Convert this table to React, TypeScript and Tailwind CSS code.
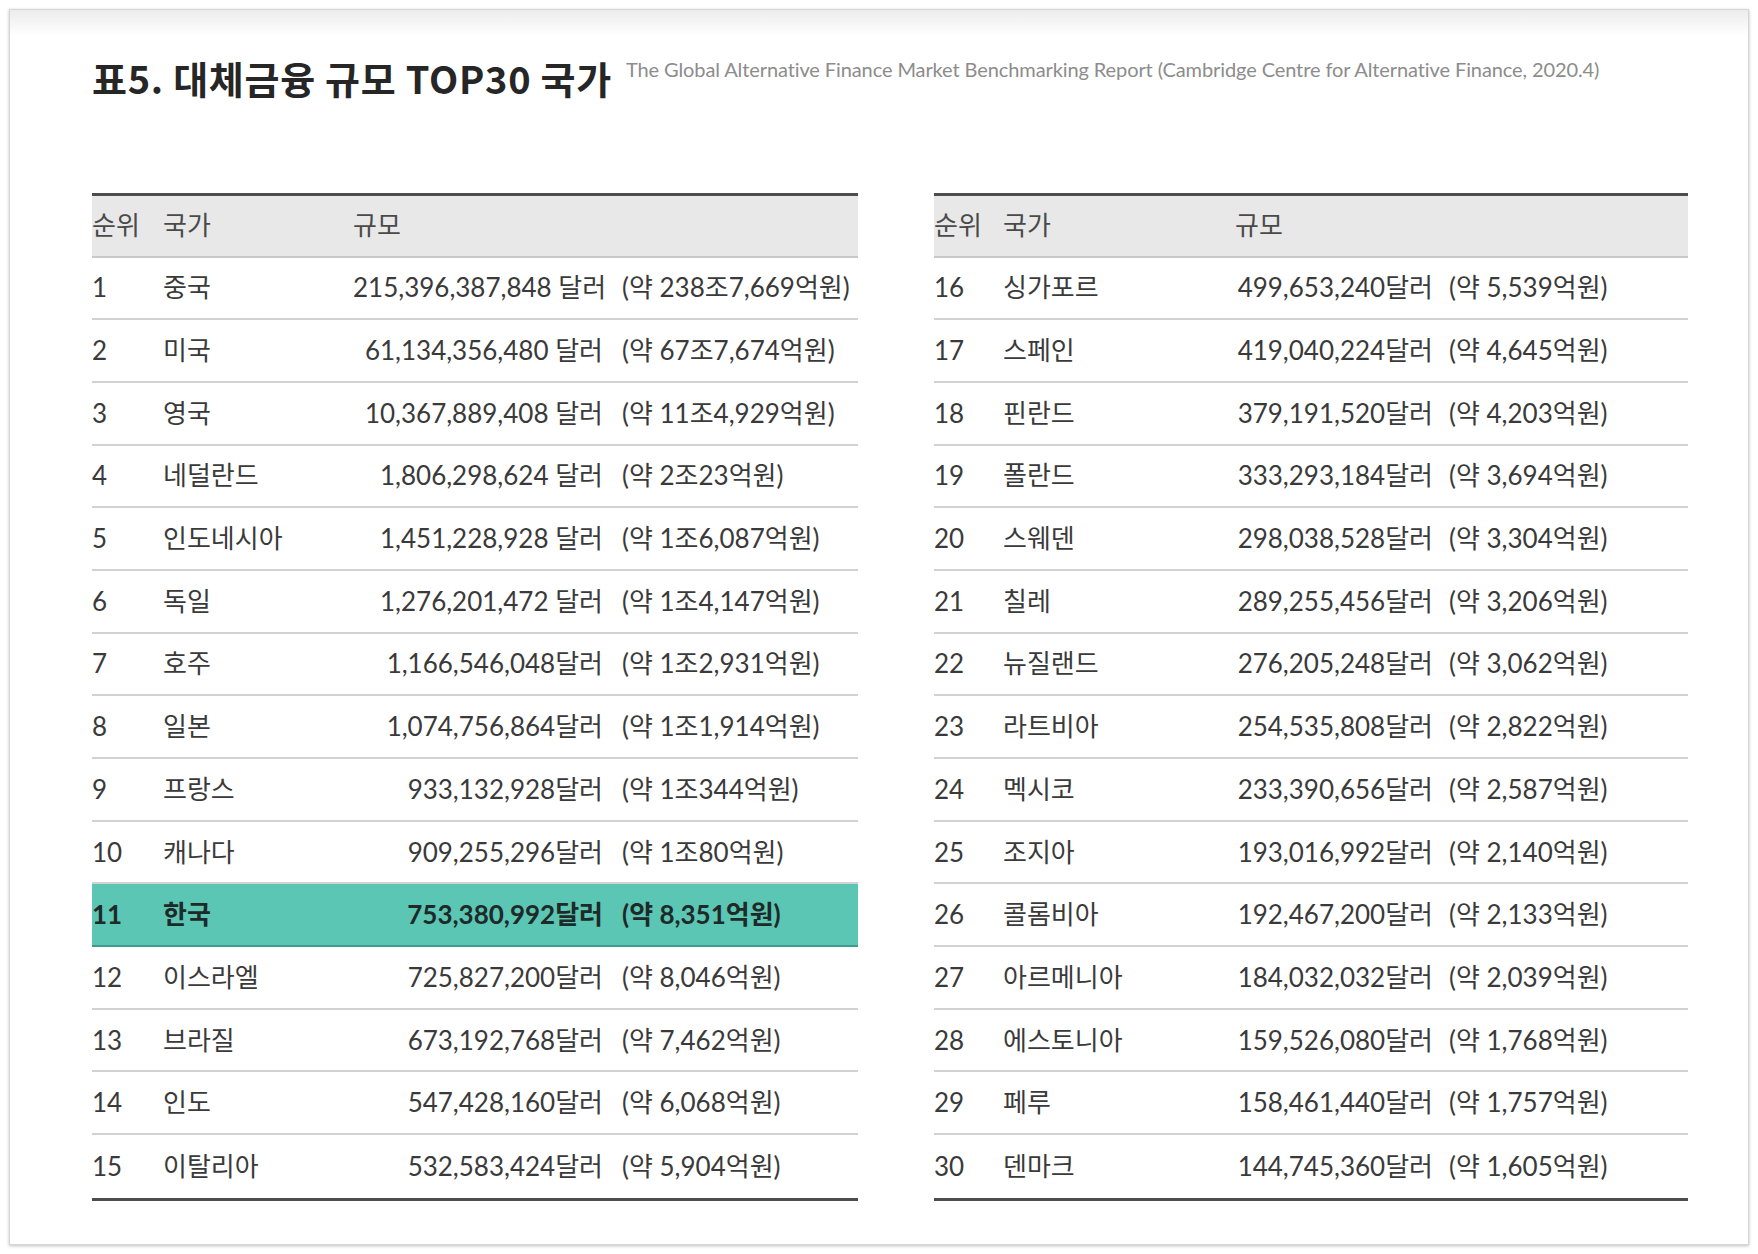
import React from "react";

type Row = { rank: string; country: string; amount: string; krw: string };

const left: Row[] = [
  { rank: "1", country: "중국", amount: "215,396,387,848 달러", krw: "(약 238조7,669억원)" },
  { rank: "2", country: "미국", amount: "61,134,356,480 달러", krw: "(약 67조7,674억원)" },
  { rank: "3", country: "영국", amount: "10,367,889,408 달러", krw: "(약 11조4,929억원)" },
  { rank: "4", country: "네덜란드", amount: "1,806,298,624 달러", krw: "(약 2조23억원)" },
  { rank: "5", country: "인도네시아", amount: "1,451,228,928 달러", krw: "(약 1조6,087억원)" },
  { rank: "6", country: "독일", amount: "1,276,201,472 달러", krw: "(약 1조4,147억원)" },
  { rank: "7", country: "호주", amount: "1,166,546,048달러", krw: "(약 1조2,931억원)" },
  { rank: "8", country: "일본", amount: "1,074,756,864달러", krw: "(약 1조1,914억원)" },
  { rank: "9", country: "프랑스", amount: "933,132,928달러", krw: "(약 1조344억원)" },
  { rank: "10", country: "캐나다", amount: "909,255,296달러", krw: "(약 1조80억원)" },
  { rank: "11", country: "한국", amount: "753,380,992달러", krw: "(약 8,351억원)" },
  { rank: "12", country: "이스라엘", amount: "725,827,200달러", krw: "(약 8,046억원)" },
  { rank: "13", country: "브라질", amount: "673,192,768달러", krw: "(약 7,462억원)" },
  { rank: "14", country: "인도", amount: "547,428,160달러", krw: "(약 6,068억원)" },
  { rank: "15", country: "이탈리아", amount: "532,583,424달러", krw: "(약 5,904억원)" },
];

const right: Row[] = [
  { rank: "16", country: "싱가포르", amount: "499,653,240달러", krw: "(약 5,539억원)" },
  { rank: "17", country: "스페인", amount: "419,040,224달러", krw: "(약 4,645억원)" },
  { rank: "18", country: "핀란드", amount: "379,191,520달러", krw: "(약 4,203억원)" },
  { rank: "19", country: "폴란드", amount: "333,293,184달러", krw: "(약 3,694억원)" },
  { rank: "20", country: "스웨덴", amount: "298,038,528달러", krw: "(약 3,304억원)" },
  { rank: "21", country: "칠레", amount: "289,255,456달러", krw: "(약 3,206억원)" },
  { rank: "22", country: "뉴질랜드", amount: "276,205,248달러", krw: "(약 3,062억원)" },
  { rank: "23", country: "라트비아", amount: "254,535,808달러", krw: "(약 2,822억원)" },
  { rank: "24", country: "멕시코", amount: "233,390,656달러", krw: "(약 2,587억원)" },
  { rank: "25", country: "조지아", amount: "193,016,992달러", krw: "(약 2,140억원)" },
  { rank: "26", country: "콜롬비아", amount: "192,467,200달러", krw: "(약 2,133억원)" },
  { rank: "27", country: "아르메니아", amount: "184,032,032달러", krw: "(약 2,039억원)" },
  { rank: "28", country: "에스토니아", amount: "159,526,080달러", krw: "(약 1,768억원)" },
  { rank: "29", country: "페루", amount: "158,461,440달러", krw: "(약 1,757억원)" },
  { rank: "30", country: "덴마크", amount: "144,745,360달러", krw: "(약 1,605억원)" },
];

function Table({ rows, side }: { rows: Row[]; side: "left" | "right" }) {
  const cols =
    side === "left"
      ? "grid-cols-[71px_190px_250px_1fr]"
      : "grid-cols-[69px_232px_198px_1fr]";
  const width = side === "left" ? "w-[766px]" : "w-[754px]";
  return (
    <div className={`${width} border-t-[3px] border-b-[3px] border-[#4d4d4d]`}>
      <div className={`grid ${cols} items-center h-[61.5px] bg-[#e8e8e9] border-b-2 border-[#c9c9c9] text-[#4a4a4a]`}>
        <div>순위</div>
        <div>국가</div>
        <div>규모</div>
        <div></div>
      </div>
      {rows.map((r, i) => {
        const hl = r.rank === "11";
        const last = i === rows.length - 1;
        return (
          <div
            key={r.rank}
            className={`grid ${cols} items-center h-[62.7px] ${
              last ? "" : hl ? "border-b-2 border-[#3f9c8b]" : "border-b-2 border-[#d2d2d2]"
            } ${hl ? "bg-[#5cc6b4] font-bold text-[#1e2a28]" : "text-[#3a3a3a]"}`}
          >
            <div>{r.rank}</div>
            <div className="whitespace-nowrap">{r.country}</div>
            <div className="text-right whitespace-nowrap">{r.amount}</div>
            <div className={side === "left" ? "pl-[19px] whitespace-nowrap" : "pl-[16px] whitespace-nowrap"}>{r.krw}</div>
          </div>
        );
      })}
    </div>
  );
}

export default function App() {
  return (
    <div className="w-[1758px] h-[1254px] bg-white p-[9px]" style={{ fontFamily: "Lato, 'Noto Sans CJK KR', sans-serif" }}>
      <div className="w-full h-full border border-[#d6d6d6] shadow-[0_1px_3px_rgba(0,0,0,0.25)] bg-[linear-gradient(to_bottom,#ececec_0px,#ffffff_26px,#ffffff_100%)] pl-[82px] pt-[45px]">
        <div className="flex items-start">
          <h1
            className="text-[38px] leading-[46px] font-bold text-[#262626] tracking-[0.7px] whitespace-nowrap"
            style={{ fontFamily: "'Noto Sans CJK KR', sans-serif" }}
          >
            표5. 대체금융 규모 TOP30 국가
          </h1>
          <div className="ml-[14px] mt-[2px] text-[20px] leading-[24px] text-[#8c8c8c] tracking-[-0.1px] whitespace-nowrap">
            The Global Alternative Finance Market Benchmarking Report (Cambridge Centre for Alternative Finance, 2020.4)
          </div>
        </div>
        <div className="flex gap-[76px] mt-[92px] text-[26px] tracking-[0px]">
          <Table rows={left} side="left" />
          <Table rows={right} side="right" />
        </div>
      </div>
    </div>
  );
}
